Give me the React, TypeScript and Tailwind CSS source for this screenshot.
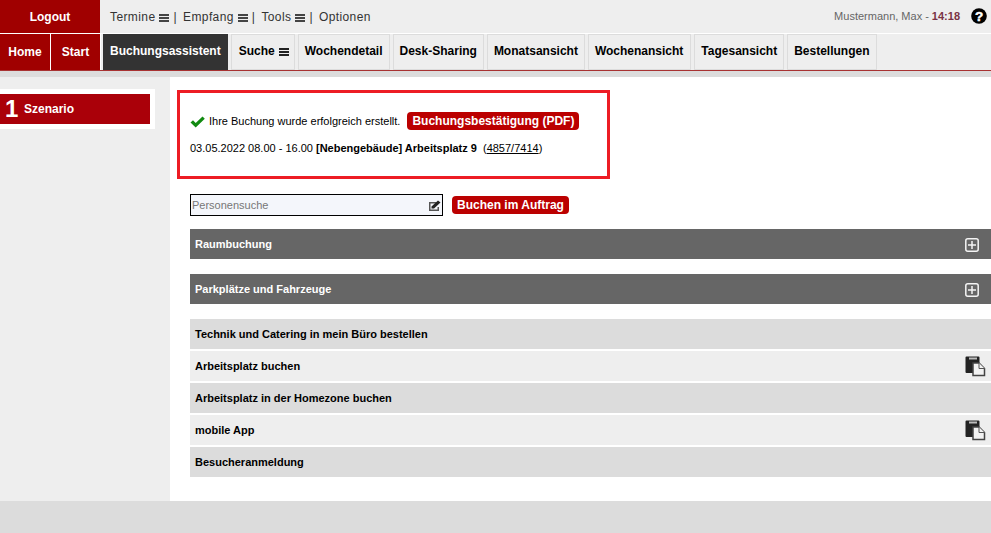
import React from "react";

const Burger = ({ cls = "bg-[#444]" }: { cls?: string }) => (
  <span className="flex flex-col gap-[1px] w-[10px] mt-[2px] shrink-0">
    <span className={`h-[2px] ${cls}`} />
    <span className={`h-[2px] ${cls}`} />
    <span className={`h-[2px] ${cls}`} />
  </span>
);

const Tab = ({ children, dark }: { children: React.ReactNode; dark?: boolean }) => (
  <div
    className={
      dark
        ? "h-[36px] px-[7px] flex items-center bg-[#333333] text-white text-[12px] font-bold pb-[2px] mr-[3px]"
        : "h-[36px] px-[6px] flex items-center bg-[#eeeeee] border border-[#dcdcdc] text-black text-[12px] font-bold pb-[2px] mr-[3px]"
    }
  >
    {children}
  </div>
);

const Plus = () => (
  <svg width="14" height="14" viewBox="0 0 14 14" className="mr-[12px] mt-[2px]">
    <rect x="0.8" y="0.8" width="12.4" height="12.400" rx="2" fill="none" stroke="#f4f4f4" strokeWidth="1.5" />
    <path d="M7 3v8M3 7h8" stroke="#f4f4f4" strokeWidth="1.5" />
  </svg>
);

const Doc = () => (
  <svg width="21" height="21" viewBox="0 0 21 21" className="mr-[5px]">
    <path d="M0.500 1.500a1 1 0 0 1 1-1h12a1 1 0 0 1 1 1V17h-13a1 1 0 0 1-1-1z" fill="#222" />
    <rect x="4" y="1.500" width="8" height="2" fill="#bbb" />
    <path d="M8 7h6l5.500 5.500v7H8z" fill="#f2f2f2" stroke="#444" strokeWidth="1.500" />
    <path d="M14 7v5.500h5.500" fill="#f2f2f2" stroke="#555" strokeWidth="1" />
  </svg>
);

const Row = ({ children, light, icon }: { children: React.ReactNode; light?: boolean; icon?: boolean }) => (
  <div
    className={`h-[30px] mb-[2px] pl-[5px] flex items-center justify-between text-[11px] font-bold text-black ${
      light ? "bg-[#eeeeee]" : "bg-[#dcdcdc]"
    }`}
  >
    <span>{children}</span>
    {icon && <Doc />}
  </div>
);

const Section = ({ children }: { children: React.ReactNode }) => (
  <div className="h-[30px] mb-[15px] pl-[5px] flex items-center justify-between bg-[#666666] text-white text-[11px] font-bold">
    <span>{children}</span>
    <Plus />
  </div>
);

export default function App() {
  return (
    <div className="w-[991px] h-[533px] overflow-hidden bg-[#dcdcdc] flex flex-col font-['Liberation_Sans',Arial,sans-serif]">
      <div className="h-[33px] flex bg-[#eeeeee] shrink-0">
        <div className="w-[100px] bg-[#a00000] text-white text-[12px] font-bold flex items-center justify-center">Logout</div>
        <div className="flex items-center pl-[10px] text-[12px] text-[#333] tracking-[0.4px]">
          <span>Termine</span>
          <span className="ml-[4px]"><Burger /></span>
          <span className="ml-[4px]">|</span>
          <span className="ml-[6px]">Empfang</span>
          <span className="ml-[4px]"><Burger /></span>
          <span className="ml-[4px]">|</span>
          <span className="ml-[6px]">Tools</span>
          <span className="ml-[4px]"><Burger /></span>
          <span className="ml-[4px]">|</span>
          <span className="ml-[6px]">Optionen</span>
        </div>
        <div className="ml-auto flex items-center text-[11px] text-[#666] pr-[4px] pb-[1px]">
          <span>Mustermann, Max - </span>
          <span className="font-bold text-[#7a3344] ml-[3px]">14:18</span>
          <svg width="16" height="16" viewBox="0 0 16 16" className="ml-[11px]">
            <circle cx="8" cy="8" r="7.800" fill="#000" />
            <text x="8" y="12.700" textAnchor="middle" fontSize="13.500" fontWeight="700" fill="#fff" stroke="#fff" strokeWidth="0.500" fontFamily="Liberation Sans">?</text>
          </svg>
        </div>
      </div>
      <div className="h-[38px] bg-[#eeeeee] border-t border-white border-b border-b-[#a83232] flex shrink-0">
        <div className="w-[51px] bg-[#a00000] text-white text-[12px] font-bold flex items-center justify-center border-r border-white">Home</div>
        <div className="w-[50px] bg-[#a00000] text-white text-[12px] font-bold flex items-center justify-center border-r border-white mr-[2px]">Start</div>
        <Tab dark>Buchungsassistent</Tab>
        <Tab>
          <span className="ml-[1px]">Suche</span>
          <span className="ml-[4px] mr-[-1px]"><Burger cls="bg-[#222]" /></span>
        </Tab>
        <Tab>Wochendetail</Tab>
        <Tab>Desk-Sharing</Tab>
        <Tab>Monatsansicht</Tab>
        <Tab>
          <span className="mr-[1px]">Wochenansicht</span>
        </Tab>
        <Tab>Tagesansicht</Tab>
        <Tab>Bestellungen</Tab>
      </div>
      <div className="h-[6px] bg-[#dcdcdc] shrink-0" />
      <div className="h-[424px] flex shrink-0 bg-[#eeeeee]">
        <div className="w-[170px] shrink-0 pt-[12px]">
          <div className="w-[155px] h-[40px] bg-white py-[5px] pr-[5px]">
            <div className="h-[30px] bg-[#aa0009] text-white flex items-center">
              <span className="text-[24px] font-bold w-[24px] pl-[5px] leading-none">1</span>
              <span className="text-[12px] font-bold">Szenario</span>
            </div>
          </div>
        </div>
        <div className="flex-1 bg-white">
          <div className="mt-[13px] ml-[7px] w-[433px] h-[89px] border-[3px] border-[#ed1c24] pl-[10px] pt-[19px] text-[11px] text-black">
            <div className="flex items-center h-[18px]">
              <svg width="15" height="12" viewBox="0 0 15 12" className="mr-[4px] mt-[1px]">
                <path d="M0.500 6.500 L3 4.200 L5.700 7 L12.500 0.500 L14.800 2.800 L5.700 11.500z" fill="#118a11" />
              </svg>
              <span>Ihre Buchung wurde erfolgreich erstellt.</span>
              <span className="ml-[7px] h-[18px] px-[5px] rounded-[4px] bg-[#bb0000] text-white text-[12px] font-bold flex items-center">Buchungsbestätigung (PDF)</span>
            </div>
            <div className="mt-[10px]">
              03.05.2022 08.00 - 16.00 <b>[Nebengebäude] Arbeitsplatz 9</b>
              <span className="ml-[6px]">(<span className="underline">4857/7414</span>)</span>
            </div>
          </div>
          <div className="mt-[15px] ml-[20px] flex items-center">
            <div className="w-[253px] h-[22px] border border-black bg-[#f4f6fb] pl-[1px] pr-[1px] flex items-center justify-between text-[11px] text-[#777]">
              <span>Personensuche</span>
              <svg width="13" height="11" viewBox="0 0 13 11">
                <path d="M1 2h7.500v1.500H2.500v6h7V7H11v4H1z" fill="#555" />
                <path d="M3.500 6.500 10 0.500 12.500 2.500 6 8.500H3.500z" fill="#222" />
              </svg>
            </div>
            <span className="ml-[9px] h-[18px] px-[5px] rounded-[4px] bg-[#bb0000] text-white text-[12px] font-bold flex items-center">Buchen im Auftrag</span>
          </div>
          <div className="mt-[13px] ml-[20px]">
            <Section>Raumbuchung</Section>
            <Section>Parkplätze und Fahrzeuge</Section>
            <Row>Technik und Catering in mein Büro bestellen</Row>
            <Row light icon>Arbeitsplatz buchen</Row>
            <Row>Arbeitsplatz in der Homezone buchen</Row>
            <Row light icon>mobile App</Row>
            <Row>Besucheranmeldung</Row>
          </div>
        </div>
      </div>
    </div>
  );
}
